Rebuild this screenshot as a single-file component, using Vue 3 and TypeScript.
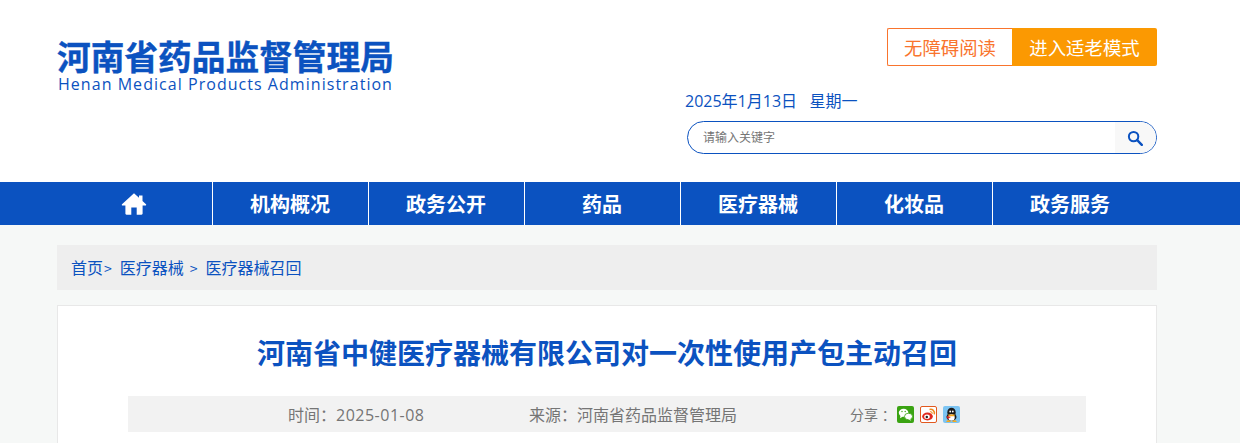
<script setup lang="ts">
const nav: string[] = ['机构概况', '政务公开', '药品', '医疗器械', '化妆品', '政务服务']
</script>

<template>
  <div class="page">
    <header class="header">
      <div class="logo">
        <div class="logo-cn">河南省药品监督管理局</div>
        <div class="logo-en">Henan Medical Products Administration</div>
      </div>
      <div class="tools">
        <div class="modes">
          <a class="mode-a">无障碍阅读</a>
          <a class="mode-b">进入适老模式</a>
        </div>
        <div class="date">2025年1月13日&nbsp;&nbsp;&nbsp;星期一</div>
        <div class="search">
          <span class="placeholder">请输入关键字</span>
          <span class="search-btn">
            <svg width="16" height="16" viewBox="0 0 16 16" fill="none">
              <circle cx="6.600" cy="6.600" r="4.700" stroke="#0b52c0" stroke-width="2" />
              <path d="M10.200 10.200L14.800 14.800" stroke="#0b52c0" stroke-width="2.400" stroke-linecap="round" />
            </svg>
          </span>
        </div>
      </div>
    </header>

    <nav class="nav">
      <div class="nav-inner">
        <a class="nav-item">
          <svg width="26" height="24" viewBox="0 0 26 24">
            <path fill="#fff" d="M13 1.200L1 12.200c-.5.6-.2 1.300.5 1.300H4.400V21.600c0 .7.400 1.100 1.100 1.100H10.300V15.500H15.700V22.700H20.500c.7 0 1.100-.4 1.100-1.100V13.500H24.500c.7 0 1-.7.5-1.300L21.500 9V3.400H18V5.800Z" />
          </svg>
        </a>
        <a v-for="n in nav" :key="n" class="nav-item">{{ n }}</a>
      </div>
    </nav>

    <main class="main">
      <div class="crumbs">
        <a>首页</a><span class="sep1">&gt;</span><a>医疗器械</a><span class="sep2">&gt;</span><a>医疗器械召回</a>
      </div>
      <article class="card">
        <h1 class="title">河南省中健医疗器械有限公司对一次性使用产包主动召回</h1>
        <div class="meta">
          <span class="time">时间：<span class="num">2025-01-08</span></span>
          <span class="source">来源：河南省药品监督管理局</span>
          <span class="share">
            <span class="share-label">分享&nbsp;：</span>
            <svg class="ico" width="17" height="17" viewBox="0 0 17 17">
              <rect width="17" height="17" rx="2" fill="#3aa312" />
              <ellipse cx="6.600" cy="6.800" rx="4.800" ry="4" fill="#fff" />
              <path d="M3.500 9.500L3 12.200L6 10.500Z" fill="#fff" />
              <ellipse cx="11.500" cy="10.500" rx="4" ry="3.300" fill="#fff" stroke="#3aa312" stroke-width=".8" />
              <path d="M13 13L14.200 14.800L11.500 13.500Z" fill="#fff" />
              <circle cx="5" cy="5.500" r=".7" fill="#3aa312" />
              <circle cx="8.200" cy="5.500" r=".7" fill="#3aa312" />
            </svg>
            <svg class="ico" width="17" height="17" viewBox="0 0 17 17">
              <rect x=".5" y=".5" width="16" height="16" rx="1.500" fill="#fff" stroke="#e2591f" />
              <ellipse cx="7.500" cy="10.500" rx="5.300" ry="3.900" fill="#e0291f" />
              <ellipse cx="7" cy="10.800" rx="2.800" ry="2.200" fill="#fff" />
              <circle cx="6.800" cy="11" r="1.200" fill="#222" />
              <path d="M9.500 3.500C12.500 2.800 15 5 14.300 8.300" fill="none" stroke="#f08a1d" stroke-width="1.500" />
              <path d="M10 5.800C11.400 5.500 12.400 6.500 12.100 7.800" fill="none" stroke="#f08a1d" stroke-width="1.100" />
            </svg>
            <svg class="ico" width="17" height="17" viewBox="0 0 17 17">
              <rect width="17" height="17" rx="2" fill="#7cc4f2" />
              <ellipse cx="8.500" cy="6.500" rx="4.200" ry="4.800" fill="#1a1a1a" />
              <ellipse cx="8.500" cy="11" rx="5" ry="4" fill="#1a1a1a" />
              <ellipse cx="8.500" cy="11.500" rx="3.200" ry="3.200" fill="#fff" />
              <path d="M5 8.500H12L11 10.200H6Z" fill="#f7a81b" />
              <path d="M3.500 10L8 11L4.500 13Z" fill="#d9201c" />
              <path d="M3 16H8L6.500 14.200H4.500ZM9 16H14L12.500 14.200H10.500Z" fill="#f7a81b" />
              <circle cx="7.200" cy="5.500" r=".9" fill="#fff" />
              <circle cx="9.800" cy="5.500" r=".9" fill="#fff" />
            </svg>
          </span>
        </div>
      </article>
    </main>
  </div>
</template>

<style>
html, body { margin: 0; padding: 0; background: #f6f8f7; overflow: hidden; }
</style>

<style scoped>
.page {
  width: 1240px;
  height: 443px;
  overflow: hidden;
  background: #f6f8f7;
  font-family: "Open Sans", "Noto Sans CJK SC", sans-serif;
}
.header {
  height: 182px;
  background: #fff;
  padding: 0 83px 0 57px;
  display: flex;
  justify-content: space-between;
}
.logo { padding-top: 38px; width: 340px; color: #0b52c0; }
.logo-cn {
  font-size: 33.700px;
  line-height: 36px;
  height: 36px;
  font-weight: 700;
  white-space: nowrap;
  font-family: "Noto Sans CJK SC", sans-serif;
  -webkit-text-stroke: .4px #0b52c0;
}
.logo-en {
  font-family: "Open Sans", sans-serif;
  font-size: 16px;
  line-height: 20px;
  padding-left: 1px;
  letter-spacing: 1.040px;
  white-space: nowrap;
}
.tools { width: 470px; padding-top: 28px; display: flex; flex-direction: column; align-items: flex-end; }
.modes { display: flex; height: 38px; font-size: 18.400px; line-height: 38px; font-family: "Noto Sans CJK SC", sans-serif; }
.mode-a {
  width: 125px;
  box-sizing: border-box;
  border: 1px solid #f9742d;
  border-right: 0;
  border-radius: 2px 0 0 2px;
  line-height: 36px;
  background: #fff;
  color: #f9742d;
  text-align: center;
}
.mode-b {
  width: 145px;
  background: #fb9902;
  color: #fff;
  text-align: center;
  border-radius: 0 2px 2px 0;
}
.date {
  align-self: flex-start;
  margin: 24px 0 0 -2px;
  font-size: 16px;
  line-height: 22px;
  color: #0b52c0;
  white-space: nowrap;
}
.search {
  margin-top: 9px;
  width: 470px;
  height: 33px;
  box-sizing: border-box;
  border: 1px solid #0b52c0;
  border-radius: 17px;
  overflow: hidden;
  display: flex;
  justify-content: space-between;
  background: #fff;
}
.placeholder {
  padding-left: 15px;
  font-size: 12px;
  line-height: 29px;
  color: #757575;
  font-family: "Noto Sans CJK SC", sans-serif;
}
.search-btn {
  width: 41px;
  box-sizing: border-box;
  background: #f8f8f8;
  display: flex;
  align-items: center;
  justify-content: center;
  padding-right: 2px;
}
.nav { height: 43px; background: #0b52c0; }
.nav-inner { display: flex; margin-left: 57px; }
.nav-item {
  width: 156px;
  height: 43px;
  box-sizing: border-box;
  border-right: 1px solid #fff;
  padding-right: 1px;
  display: flex;
  align-items: center;
  justify-content: center;
  color: #fff;
  font-size: 20px;
  font-weight: 700;
  font-family: "Noto Sans CJK SC", sans-serif;
}
.nav-item:last-child { border-right: 0; padding-right: 2px; }
.main { padding: 20px 83px 0 57px; }
.crumbs {
  height: 45px;
  background: #eeeeee;
  padding-left: 14px;
  font-size: 16px;
  line-height: 45px;
  color: #0b52c0;
  font-family: "Noto Sans CJK SC", sans-serif;
}
.sep1 { margin: 0 8px 0 1px; font-size: 14px; }
.sep2 { margin: 0 8px 0 6px; font-size: 14px; }
.card {
  margin-top: 15px;
  height: 200px;
  box-sizing: border-box;
  background: #fff;
  border: 1px solid #e8e8e8;
  padding: 0 70px;
}
.title {
  margin: 0;
  padding-top: 24px;
  height: 90px;
  box-sizing: border-box;
  text-align: center;
  font-size: 28px;
  line-height: 44px;
  font-weight: 700;
  color: #0b52c0;
  font-family: "Noto Sans CJK SC", sans-serif;
}
.meta {
  height: 36px;
  background: #f2f2f2;
  display: flex;
  align-items: center;
  padding-left: 160px;
  color: #757575;
  font-size: 16px;
}
.time { width: 241px; white-space: nowrap; }
.num { letter-spacing: .5px; }
.source { width: 321px; white-space: nowrap; }
.share { display: flex; align-items: center; }
.share-label { font-size: 14px; width: 47px; white-space: nowrap; }
.ico { margin-right: 6px; }
</style>
